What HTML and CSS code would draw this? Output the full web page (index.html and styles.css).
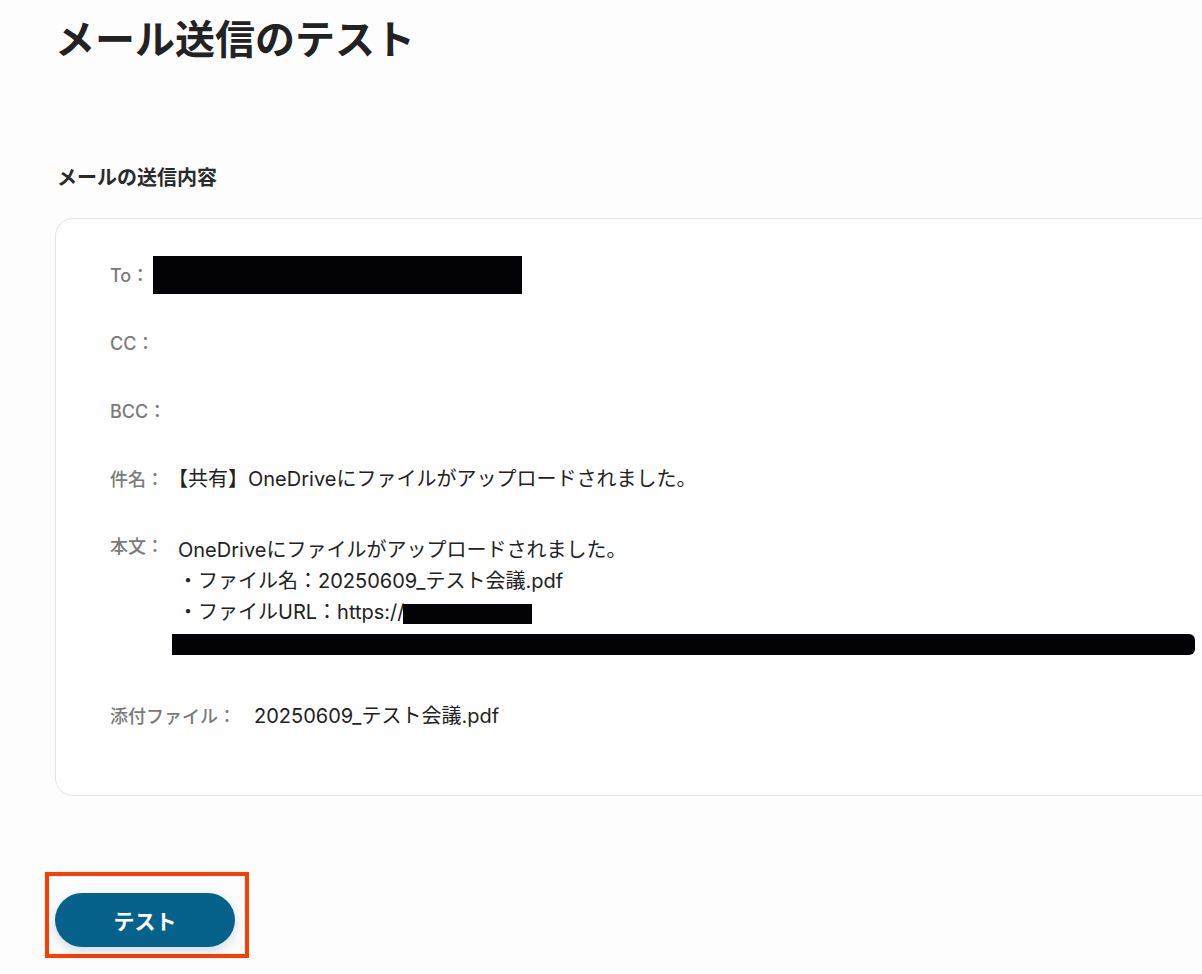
FILE: index.html
```html
<!DOCTYPE html>
<html lang="ja">
<head>
    <meta charset="utf-8">
    <title>メール送信のテスト</title>
    <link rel="stylesheet" href="styles.css">
</head>
<body>
    <div class="page">
        <h1 class="title">メール送信のテスト</h1>

        <h2 class="section-title">メールの送信内容</h2>
        <div class="mail-card">
            <div class="mail-row">
                <span class="mail-label">To：</span>
                <span class="mail-value"><span class="redact redact-to"></span></span>
            </div>
            <div class="mail-row">
                <span class="mail-label">CC：</span>
                <span class="mail-value"></span>
            </div>
            <div class="mail-row">
                <span class="mail-label">BCC：</span>
                <span class="mail-value"></span>
            </div>
            <div class="mail-row">
                <span class="mail-label">件名：</span>
                <span class="mail-value">【共有】OneDriveにファイルがアップロードされました。</span>
            </div>
            <div class="mail-row mail-body">
                <span class="mail-label">本文：</span>
                <div class="mail-value">
                    <div>OneDriveにファイルがアップロードされました。</div>
                    <div>・ファイル名：20250609_テスト会議.pdf</div>
                    <div>・ファイルURL：https://<span class="redact redact-url"></span></div>
                    <div class="redact-line"><span class="redact redact-long"></span></div>
                </div>
            </div>
            <div class="mail-row">
                <span class="mail-label">添付ファイル：</span>
                <span class="mail-value attach">20250609_テスト会議.pdf</span>
            </div>
        </div>

        <div class="action">
            <div class="highlight">
                <button class="test-button" type="button">テスト</button>
            </div>
        </div>
    </div>
</body>
</html>
```

FILE: styles.css
```css
body {
    margin: 0;
    background: #fdfdfe;
    font-family: Inter, "Noto Sans CJK JP", sans-serif;
    color: #222;
    overflow: hidden;
}
.page {
    padding: 16px 0 0 55px;
}
.title {
    margin: 0;
    font-size: 40px;
    line-height: 48px;
    font-weight: 700;
    color: #222;
}
.section-title {
    margin: 100px 0 0 2px;
    font-size: 20px;
    line-height: 28px;
    font-weight: 700;
    color: #2a2a2a;
}
.mail-card {
    margin-top: 26px;
    width: 1200px;
    box-sizing: border-box;
    height: 578px;
    border: 1px solid #e6e4e9;
    border-radius: 18px;
    background: #fefefe;
    padding: 36px 0 0 54px;
}
.mail-row {
    display: flex;
    gap: 4px;
    align-items: center;
    height: 40px;
    margin-bottom: 28px;
    font-size: 18px;
    line-height: 31px;
}
.mail-label {
    color: #7a7a7a;
    font-weight: 500;
    white-space: nowrap;
}
.mail-value {
    color: #222;
    font-size: 20px;
}
.mail-body {
    align-items: flex-start;
    height: auto;
    margin-bottom: 37px;
    padding-top: 4px;
}
.mail-body .mail-value {
    margin-left: 10px;
    padding-top: 4px;
}
.attach {
    margin-left: 14px;
}
.redact {
    display: inline-block;
    background: #030207;
    vertical-align: middle;
}
.redact-to {
    width: 369px;
    height: 38px;
}
.redact-url {
    width: 129px;
    height: 20px;
    margin-left: -1px;
}
.redact-line {
    margin-left: -6px;
    height: 31px;
}
.redact-long {
    width: 1023px;
    height: 21px;
    border-radius: 0 6px 6px 0;
}
.action {
    margin-top: 76px;
    margin-left: -10px;
}
.highlight {
    display: inline-block;
    border: 4px solid #ff3d00;
    padding: 17px 10px 7px 6px;
}
.test-button {
    display: block;
    width: 180px;
    height: 54px;
    border: none;
    border-radius: 27px;
    background: #06628a;
    color: #fff;
    font-family: Inter, "Noto Sans CJK JP", sans-serif;
    font-size: 21px;
    font-weight: 700;
    box-shadow: 0 4px 12px rgba(6, 60, 90, 0.18);
}
```
